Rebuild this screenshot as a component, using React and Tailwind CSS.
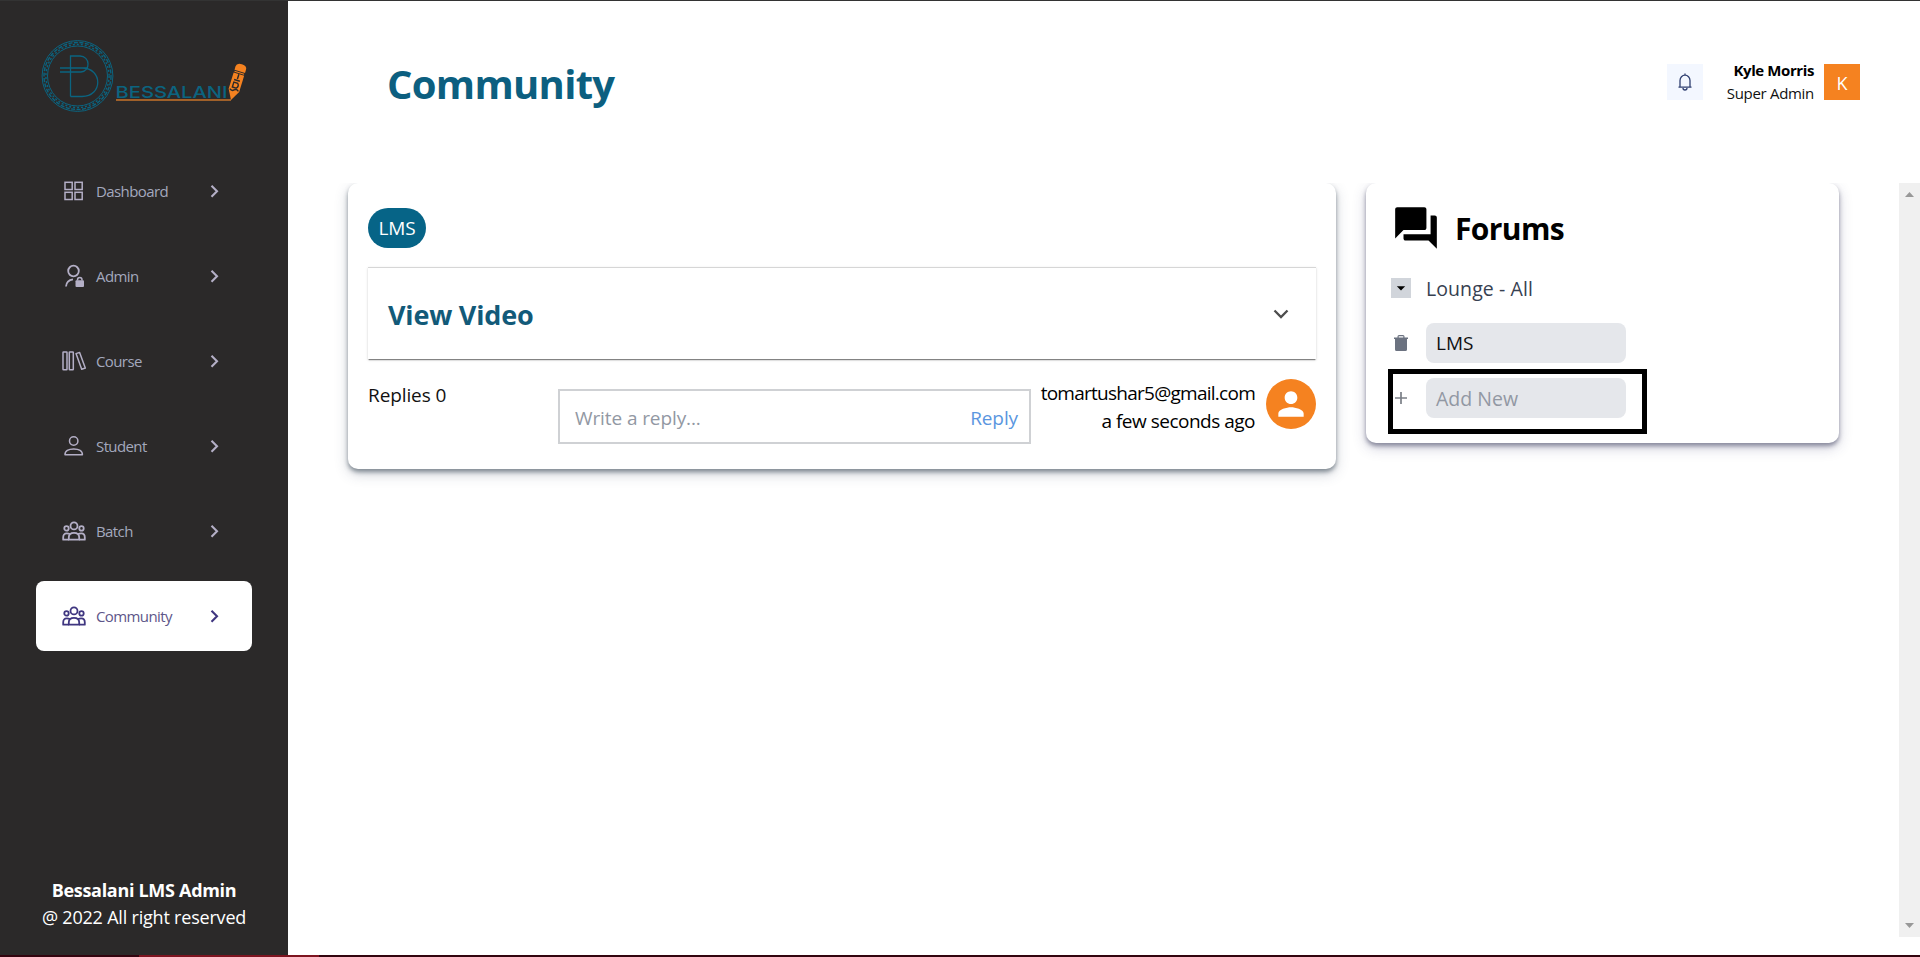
import { MdForum, MdPerson, MdArrowDropDown } from "react-icons/md";

function Logo() {
  return (
    <svg width="210" height="76" viewBox="39 38 210 76" fill="none">
      <g stroke="#0b6480">
        <circle cx="77.500" cy="76" r="35.400" strokeWidth="1" />
        <circle cx="77.500" cy="76" r="30" strokeWidth="1" />
        <circle cx="77.500" cy="76" r="33.500" strokeWidth="1.400" strokeDasharray="4 1.500" />
        <circle cx="77.500" cy="76" r="31.600" strokeWidth="1.400" strokeDasharray="2 2" />
        <path
          d="M70.500 96.500V56h9.500c10 0 11 15 1 16H60M60 68h28M70.500 96.500H82c21 0 21-28.500 0-28.500"
          strokeWidth="1.300"
        />
      </g>
      <text
        x="115.500"
        y="98"
        textLength="112"
        lengthAdjust="spacingAndGlyphs"
        fill="#0b6480"
        fontFamily="Inter, sans-serif"
        fontSize="16.500"
        fontWeight="500"
      >
        BESSALANI
      </text>
      <path d="M116 100H231" stroke="#c9732a" strokeWidth="1.500" />
      <g transform="translate(231 100) rotate(17)">
        <path d="M0 0L-5.500-10V-27H5.500V-10Z" fill="#f58220" />
        <path d="M-5.500-30V-33.500Q-5.500-37.500 0-37.500T5.500-33.500V-30Z" fill="#f58220" />
        <path d="M-5-28.500H5" stroke="#f58220" strokeWidth="1.200" />
        <path
          d="M-4.500-10.500Q-2-8.500 0-10.500T4.500-10.500M-2.500-12.800V-18H1.500Q4-15.500 1.500-12.800ZM-3-20.500H3M0-22V-27"
          stroke="#2b2929"
          strokeWidth="1.400"
        />
      </g>
    </svg>
  );
}

function IconGrid() {
  return (
    <svg width="24" height="24" viewBox="0 0 24 24" fill="none" stroke="currentColor" strokeWidth="1.5">
      <rect x="3" y="3.300" width="7.200" height="7.200" />
      <rect x="13" y="3.300" width="7.200" height="7.200" />
      <rect x="3" y="13.300" width="7.200" height="7.200" />
      <rect x="13" y="13.300" width="7.200" height="7.200" />
    </svg>
  );
}

function IconAdmin() {
  return (
    <svg width="24" height="24" viewBox="0 0 24 24" fill="none" stroke="currentColor" strokeWidth="1.8">
      <circle cx="11.500" cy="7" r="5.300" />
      <path d="M4 22.500C4.300 18.500 7 15.800 11 15.300" />
      <rect x="13.500" y="16.300" width="8.500" height="6.700" rx="1" fill="currentColor" stroke="none" />
      <path d="M15.500 16.500V15.700a2.250 2.250 0 0 1 4.500 0v.8" strokeWidth="1.500" />
    </svg>
  );
}

function IconBooks() {
  return (
    <svg width="24" height="24" viewBox="0 0 24 24" fill="none" stroke="currentColor" strokeWidth="1.5" strokeLinejoin="round">
      <rect x="1" y="3" width="4" height="17.800" rx=".5" />
      <rect x="7.300" y="3" width="4" height="17.800" rx=".5" />
      <path d="M14 4.600L17.600 3.400L23.300 19L19.700 20.300Z" />
    </svg>
  );
}

function IconUser() {
  return (
    <svg width="24" height="24" viewBox="0 0 24 24" fill="none" stroke="currentColor" strokeWidth="1.5" strokeLinejoin="round">
      <circle cx="11.700" cy="7" r="4.200" />
      <path d="M3 20.800C2.800 16.700 6.500 14.900 11.700 14.900S20.600 16.700 20.400 20.800Z" />
    </svg>
  );
}

function IconPeople() {
  return (
    <svg width="24" height="24" viewBox="0 0 24 24" fill="none" stroke="currentColor" strokeWidth="1.8" strokeLinejoin="round">
      <circle cx="12" cy="6.900" r="3.500" />
      <circle cx="4.500" cy="9.400" r="2.200" />
      <circle cx="19.500" cy="9.400" r="2.200" />
      <path d="M6.800 20.700V18.400C6.800 15.400 9 13.800 12 13.800S17.200 15.400 17.200 18.400V20.700Z" />
      <path d="M8 15C7 14.600 5.800 14.400 4.800 14.400C2.300 14.400 1.200 15.900 1.200 18.400V20.700H6.800M16 15C17 14.600 18.200 14.400 19.200 14.400C21.700 14.400 22.800 15.900 22.800 18.400V20.700H17.200" />
    </svg>
  );
}

const menu = [
  { label: "Dashboard", Icon: IconGrid },
  { label: "Admin", Icon: IconAdmin },
  { label: "Course", Icon: IconBooks },
  { label: "Student", Icon: IconUser },
  { label: "Batch", Icon: IconPeople },
  { label: "Community", Icon: IconPeople, active: true },
];

function MenuItem({ label, Icon, active }) {
  return (
    <a
      className={
        "flex h-[70px] items-center rounded-lg pl-[25.500px] pr-[30px] " +
        (active ? "bg-white text-[#3f3680]" : "text-[#b4afc6]")
      }
    >
      <Icon />
      <span
        className={
          "ml-[10.500px] flex-1 text-[15px] tracking-[-0.6px] " + (active ? "text-[#5d5689]" : "text-[#a3a8bd]")
        }
      >
        {label}
      </span>
      <svg width="14" height="14" viewBox="0 0 14 14" fill="none" stroke="currentColor" strokeWidth="2.1">
        <path d="M3.500 1.800L9 7.300L3.500 12.800" />
      </svg>
    </a>
  );
}

function Sidebar() {
  return (
    <aside className="flex w-72 shrink-0 flex-col bg-[#2b2929] px-9">
      <div className="-mr-1 h-[155px] pl-[3px] pt-[37px]">
        <Logo />
      </div>
      <nav className="flex flex-col gap-[15px]">
        {menu.map((item) => (
          <MenuItem key={item.label} {...item} />
        ))}
      </nav>
      <div className="-mx-4 mt-auto pb-6 text-center text-lg leading-[27px] text-white">
        <p className="font-bold tracking-[-0.3px]">Bessalani LMS Admin</p>
        <p className="tracking-[-0.2px]">@ 2022 All right reserved</p>
      </div>
    </aside>
  );
}

function Header() {
  return (
    <header className="flex h-[182px] shrink-0 items-start justify-between pl-[99px] pr-[60px]">
      <h1 className="mt-[59px] text-[40px] leading-[48px] font-bold tracking-[-0.7px] text-[#0c5f80]">Community</h1>
      <div className="mt-[58px] flex items-center">
        <div className="flex size-9 items-center justify-center bg-[#f3f7ff] text-[#2f3f70]">
          <svg width="16" height="18" viewBox="0 0 16 18" fill="none" stroke="currentColor" strokeWidth="1.3">
            <path d="M8 .5V2M3 14V7.500a5 5.300 0 0 1 10 0V14M1.500 14.200H14.500M6 15a2 2 0 0 0 4 0" />
          </svg>
        </div>
        <div className="ml-6 mr-2.5 text-right text-[15px] leading-[23px] text-[#111]">
          <p className="font-bold tracking-[-0.4px] text-black">Kyle Morris</p>
          <p className="tracking-[-0.3px]">Super Admin</p>
        </div>
        <div className="flex size-9 items-center justify-center bg-[#f58220] pt-0.5 text-lg text-white">K</div>
      </div>
    </header>
  );
}

function Post() {
  return (
    <section className="w-[988px] rounded-[10px] bg-white px-5 pb-[25px] pt-[25px] shadow-[0_3px_4px_rgba(60,75,85,0.55),0_5px_13px_rgba(60,70,100,0.25)]">
      <span className="flex h-10 w-[58px] items-center justify-center rounded-[20px] bg-[#066487] pt-px text-[19px] tracking-[-0.1px] text-white">
        LMS
      </span>
      <div className="mt-[19px] flex h-[92px] items-center justify-between border-t border-[#d6d6d6] pl-5 pr-[27px] shadow-[0_2px_1px_-1px_rgba(0,0,0,0.35),0_1px_1px_rgba(0,0,0,0.14),0_1px_3px_rgba(0,0,0,0.12)]">
        <h2 className="pt-[3px] text-[27px] font-bold tracking-[-0.2px] text-[#125a79]">View Video</h2>
        <svg width="16" height="10" viewBox="0 0 16 10" fill="none" stroke="#4d4d4d" strokeWidth="2.3">
          <path d="M1.500 1.500L8 8L14.500 1.500" />
        </svg>
      </div>
      <div className="mt-5 flex items-start text-[19px] leading-7 text-[#111]">
        <p className="mt-0.5 w-[190px] tracking-[-0.1px]">Replies 0</p>
        <div className="mt-2.5 flex h-[55px] w-[473px] items-center justify-between border-2 border-[#cfd1d4] pl-[15px] pr-[11px] pt-0.5">
          <span className="tracking-[-0.1px] text-[#9298a3]">Write a reply...</span>
          <span className="tracking-[-0.1px] text-[#5a96e0]">Reply</span>
        </div>
        <div className="flex-1 pr-[11px] text-right text-black">
          <p className="whitespace-nowrap tracking-[-0.74px]">tomartushar5@gmail.com</p>
          <p className="tracking-[-0.5px]">a few seconds ago</p>
        </div>
        <div className="flex size-[50px] items-center justify-center rounded-full bg-[#f58220]">
          <MdPerson className="size-[38px] text-white" />
        </div>
      </div>
    </section>
  );
}

function Forums() {
  return (
    <section className="w-[473px] rounded-[10px] bg-white pb-[25px] pl-[25px] pt-5 shadow-[0_3px_4px_rgba(60,62,90,0.5),0_5px_13px_rgba(60,60,110,0.25)]">
      <div className="flex h-[50px] items-center gap-3.5">
        <MdForum className="size-[50px] text-black" />
        <h2 className="pt-0.5 text-[30px] leading-[50px] font-bold tracking-[-0.6px] text-black">Forums</h2>
      </div>
      <div className="mt-[25px] flex h-5 items-center gap-[15px]">
        <span className="flex size-5 items-center justify-center bg-[#d1d5db]">
          <MdArrowDropDown className="size-5 text-black" />
        </span>
        <span className="pt-0.5 text-[19.500px] tracking-[0.08px] text-[#374151]">Lounge - All</span>
      </div>
      <div className="mt-[25px] flex h-10 items-center gap-[15px]">
        <span className="flex size-5 items-center justify-center text-[#6b7280]">
          <svg width="14" height="16" viewBox="0 0 14 16" fill="currentColor">
            <path d="M3.500 2.500V1.500Q3.500 0 5 0H9Q10.500 0 10.500 1.500V2.500H14V4H13V14.500Q13 16 11.500 16H2.500Q1 16 1 14.500V4H0V2.500ZM4.700 2.500H9.300V1.300H4.700Z" />
          </svg>
        </span>
        <span className="flex h-10 w-[200px] items-center rounded-lg bg-[#e5e7eb] pl-2.5 pt-px text-[19px] text-[#111]">
          LMS
        </span>
      </div>
      <div className="relative mt-[15px] flex h-10 items-center gap-[15px]">
        <span className="absolute -left-[3px] -top-[9px] h-[65px] w-[259px] border-5 border-black" />
        <span className="flex size-5 items-center justify-center">
          <svg width="12" height="12" viewBox="0 0 12 12" stroke="#7b7f87" strokeWidth="1.7">
            <path d="M6 0V12M0 6H12" />
          </svg>
        </span>
        <span className="flex h-10 w-[200px] items-center rounded-lg bg-[#e5e7eb] pl-2.5 pt-0.5 text-[19.500px] text-[#9298a3]">
          Add New
        </span>
      </div>
    </section>
  );
}

export default function App() {
  return (
    <div className="flex h-[957px] w-full flex-col overflow-hidden bg-white font-['Open_Sans','Noto_Sans',sans-serif]">
      <div className="h-px shrink-0 bg-[#333]" />
      <div className="flex min-h-0 flex-1">
        <Sidebar />
        <div className="flex min-w-0 flex-1 flex-col">
          <Header />
          <main className="flex h-[754px] overflow-hidden">
            <div className="flex flex-1 items-start gap-[30px] pl-[60px]">
              <Post />
              <Forums />
            </div>
            <div className="flex w-[21px] flex-col items-center justify-between bg-[#f0f0f0] py-[9px]">
              <svg width="9" height="5" viewBox="0 0 9 5" fill="#989898">
                <path d="M0 5L4.500 0L9 5Z" />
              </svg>
              <svg width="9" height="5" viewBox="0 0 9 5" fill="#989898">
                <path d="M0 0L4.500 5L9 0Z" />
              </svg>
            </div>
          </main>
        </div>
      </div>
      <div className="flex h-0.5 shrink-0 bg-[#33040f]">
        <div className="ml-[139px] w-[180px] bg-[#7d1420]" />
      </div>
    </div>
  );
}
